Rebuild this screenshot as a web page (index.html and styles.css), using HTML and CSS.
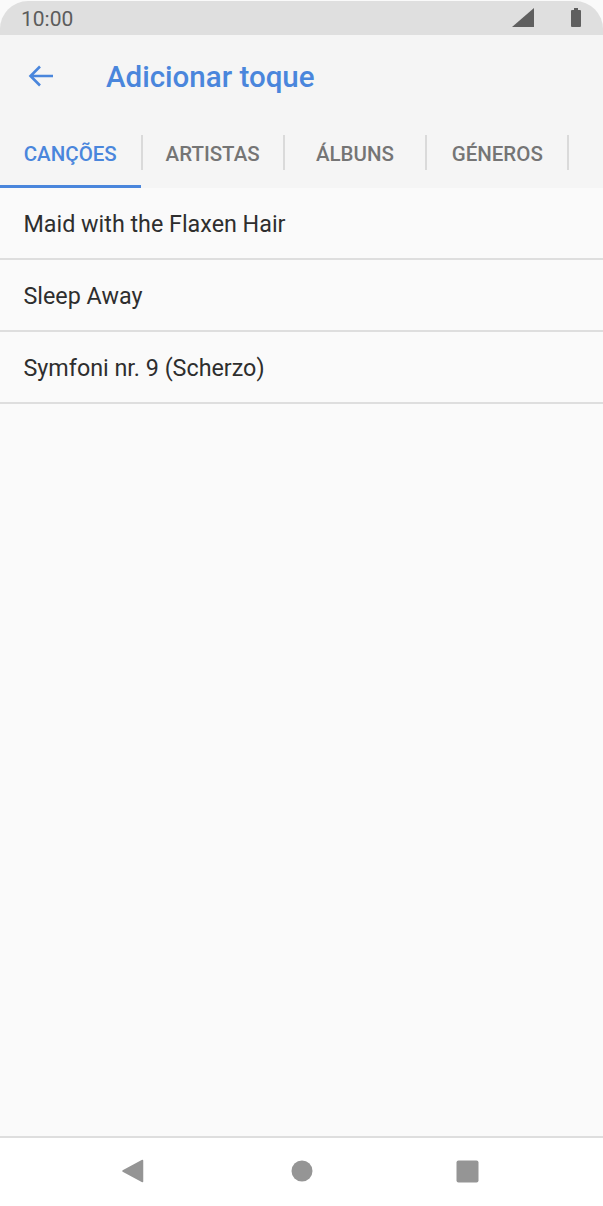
FILE: index.html
```html
<!DOCTYPE html>
<html lang="pt">
<head>
<meta charset="utf-8">
<title>Adicionar toque</title>
<link rel="stylesheet" href="styles.css">
</head>
<body>
<div class="screen">
  <div class="status">
    <span class="time">10:00</span>
    <div class="status-icons">
      <svg class="signal" width="22" height="19" viewBox="0 0 22 19"><path d="M22 0V19H0Z" fill="#5f5f5f"/></svg>
      <svg class="battery" width="10" height="19" viewBox="0 0 10 19"><path d="M3 0H7V2H9A1 1 0 0 1 10 3V18A1 1 0 0 1 9 19H1A1 1 0 0 1 0 18V3A1 1 0 0 1 1 2H3Z" fill="#5f5f5f"/></svg>
    </div>
  </div>
  <header class="appbar">
    <svg class="back" width="26" height="24" viewBox="0 0 26 24"><path d="M25 12H2.500M12 2.500 2.500 12l9.500 9.500" fill="none" stroke="#4a86dc" stroke-width="2.600"/></svg>
    <h1 class="title">Adicionar toque</h1>
  </header>
  <nav class="tabs">
    <div class="tab active">CANÇÕES</div>
    <div class="tab">ARTISTAS</div>
    <div class="tab">ÁLBUNS</div>
    <div class="tab">GÉNEROS</div>
  </nav>
  <main class="list">
    <div class="row">Maid with the Flaxen Hair</div>
    <div class="row">Sleep Away</div>
    <div class="row">Symfoni nr. 9 (Scherzo)</div>
  </main>
  <footer class="navbar">
    <svg width="24" height="24" viewBox="0 0 24 24"><path d="M21.500 1.500V22.500L2 12Z" fill="#959595" stroke="#959595" stroke-width="1.500" stroke-linejoin="round"/></svg>
    <svg width="22" height="22" viewBox="0 0 22 22"><circle cx="11" cy="11" r="10.500" fill="#959595"/></svg>
    <svg width="23" height="23" viewBox="0 0 23 23"><rect x="0.500" y="0.500" width="22" height="22" rx="2" fill="#959595"/></svg>
  </footer>
</div>
</body>
</html>
```
FILE: styles.css
```css
* { box-sizing: border-box; }
html, body { margin: 0; padding: 0; }
body { background: #fff; font-family: Roboto, "Liberation Sans", sans-serif; }
.screen { width: 603px; height: 1206px; display: flex; flex-direction: column; background: #fafafa; overflow: hidden; }
.status {
  height: 34px; margin-top: 1px; flex: none;
  background: #dfdfdf; border-radius: 28px 28px 0 0;
  display: flex; align-items: center; justify-content: space-between;
  padding: 0 22px 0 21px;
}
.time { font-size: 21px; color: #5c5c5c; padding-top: 1px; }
.status-icons { display: flex; align-items: center; gap: 37px; margin-top: -2px; }
.appbar { height: 83px; flex: none; background: #f5f5f5; display: flex; align-items: center; padding: 0 0 0 28px; gap: 52px; }
.back { flex: none; margin-top: -1px; }
.title { margin: 0; font-size: 29.5px; font-weight: 500; color: #4a86dc; padding-top: 1px; }
.tabs { height: 70px; flex: none; background: #f5f5f5; display: flex; align-items: stretch; }
.tab {
  width: 142.300px; position: relative;
  display: flex; align-items: center; justify-content: center;
  padding: 1px 0 0;
  font-size: 20.500px; font-weight: 500; color: #757575;
}
.tab::after { content: ""; position: absolute; right: -1px; top: 17px; height: 35px; width: 2px; background: #dadada; }
.tab.active { width: 141.500px; padding-right: 1px; color: #4a86dc; }
.tab.active::before { content: ""; position: absolute; left: 0; right: 1px; bottom: 0; height: 3px; background: #4a86dc; }
.list { flex: 1; }
.row {
  height: 72px; padding: 1px 24px 0 23.500px;
  display: flex; align-items: center;
  border-bottom: 2px solid #dedede;
  font-size: 23.300px; color: #2e2e2e;
}
.navbar { height: 70px; flex: none; background: #fff; border-top: 2px solid #dedede; display: flex; align-items: center; justify-content: center; padding: 0 3px 2px 0; }
.navbar svg { flex: none; }
.navbar svg:first-child { margin-right: 146px; }
.navbar svg:last-child { margin-left: 143px; }
```
